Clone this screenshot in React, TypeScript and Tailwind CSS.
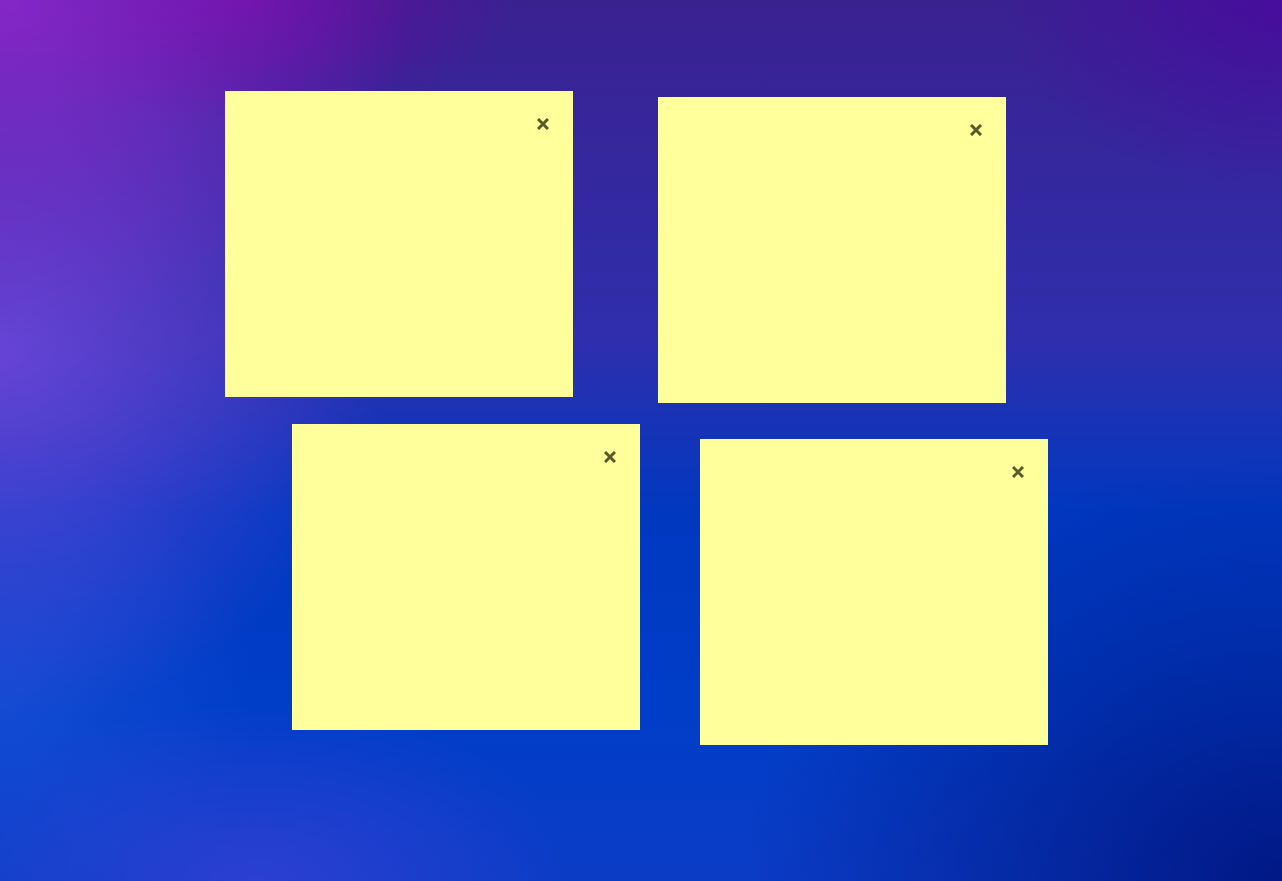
import { useState } from 'react'

type Note = { id: number; x: number; y: number; text: string }

const START_NOTES: Note[] = [
  { id: 1, x: 225, y: 91, text: '' },
  { id: 2, x: 658, y: 97, text: '' },
  { id: 3, x: 292, y: 424, text: '' },
  { id: 4, x: 700, y: 439, text: '' },
]

function CloseIcon() {
  return (
    <svg viewBox="0 0 12 12" className="w-3 h-3" fill="none" stroke="currentColor" strokeWidth="3" strokeLinecap="butt">
      <path d="M1 1L11 11M11 1L1 11" />
    </svg>
  )
}

export default function App() {
  const [notes, setNotes] = useState(START_NOTES)

  const update = (id: number, text: string) =>
    setNotes(n => n.map(note => (note.id === id ? { ...note, text } : note)))
  const remove = (id: number) => setNotes(n => n.filter(note => note.id !== id))

  return (
    <div
      className="relative w-full h-screen overflow-hidden bg-[radial-gradient(ellipse_32%_38%_at_0%_0%,rgba(140,40,205,0.9),transparent),radial-gradient(ellipse_22%_14%_at_18%_0%,rgba(108,6,160,0.85),transparent),radial-gradient(ellipse_30%_42%_at_0%_40%,rgba(112,72,220,0.85),transparent),radial-gradient(ellipse_22%_22%_at_100%_0%,rgba(74,8,160,0.8),transparent),radial-gradient(ellipse_42%_48%_at_100%_100%,rgba(0,22,130,0.95),transparent),radial-gradient(ellipse_25%_20%_at_20%_100%,rgba(52,64,214,0.8),transparent),radial-gradient(ellipse_20%_30%_at_0%_80%,rgba(26,80,216,0.7),transparent),linear-gradient(to_bottom,#3a2190_0%,#2f2eac_38%,#0038c0_58%,#003ec8_80%,#0b3cc6_100%)]"
      style={{ fontFamily: '"Liberation Sans", Arial, sans-serif' }}
    >
      {notes.map(note => (
        <div
          key={note.id}
          className="absolute w-[348px] h-[306px] bg-[#ffff9c] flex flex-col"
          style={{ left: note.x, top: note.y }}
        >
          <div className="flex justify-end pt-[27px] pr-[24px]">
            <button onClick={() => remove(note.id)} className="text-[#5a5a28] leading-none">
              <CloseIcon />
            </button>
          </div>
          <textarea
            value={note.text}
            onChange={e => update(note.id, e.target.value)}
            className="flex-1 mx-4 mb-4 bg-transparent resize-none outline-none text-sm text-[#333]"
          />
        </div>
      ))}
    </div>
  )
}
